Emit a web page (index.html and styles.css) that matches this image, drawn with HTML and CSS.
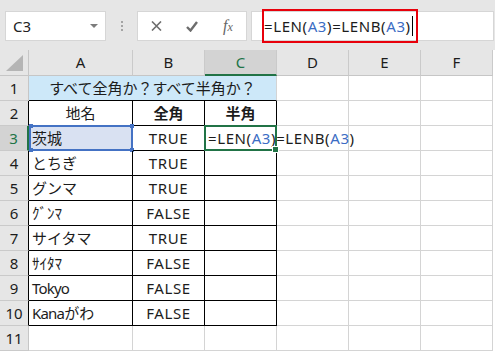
FILE: index.html
```html
<!DOCTYPE html>
<html lang="ja">
<head>
    <meta charset="UTF-8">
    <meta name="viewport" content="width=device-width, initial-scale=1.0">
    <title>LEN LENB</title>
    <link rel="stylesheet" href="styles.css">
</head>
<body>
    <div class="bar">
        <div class="namebox">
            <span>C3</span>
            <span class="drop"></span>
        </div>
        <div class="grip">
            <span></span><span></span><span></span>
        </div>
        <div class="fnbox">
            <div class="fn-btn">
                <svg width="11" height="10" viewBox="0 0 11 10"><path d="M1 0.5 L10 9.5 M10 0.5 L1 9.5" stroke="#6d6d6d" stroke-width="1.6" fill="none"/></svg>
            </div>
            <div class="fn-btn">
                <svg width="12" height="11" viewBox="0 0 12 11"><path d="M1 6 L4.5 9.5 L11 1" stroke="#6d6d6d" stroke-width="2.4" fill="none"/></svg>
            </div>
            <div class="fn-btn fx"><i>f</i><i class="x">x</i></div>
        </div>
        <div class="formula">
            <span class="en">=LEN(<span class="ref">A3</span>)=LENB(<span class="ref">A3</span>)</span><span class="caret"></span>
            <div class="mark"></div>
        </div>
    </div>

    <div class="sheet">
        <!-- column headers -->
        <div class="corner">
            <svg width="18" height="17" viewBox="0 0 18 17"><polygon points="17,0 17,16 0,16" fill="#b5b5b5"/></svg>
        </div>
        <div class="ch">A</div>
        <div class="ch">B</div>
        <div class="ch sel">C</div>
        <div class="ch">D</div>
        <div class="ch">E</div>
        <div class="ch">F</div>

        <!-- row 1 -->
        <div class="rh">1</div>
        <div class="c title">すべて全角か？すべて半角か？</div>
        <div class="c"></div><div class="c"></div><div class="c"></div>

        <!-- row 2 -->
        <div class="rh b">2</div>
        <div class="c b mid">地名</div>
        <div class="c b mid bold">全角</div>
        <div class="c b mid bold">半角</div>
        <div class="c"></div><div class="c"></div><div class="c"></div>

        <!-- row 3 -->
        <div class="rh sel">3</div>
        <div class="c b picked">茨城<div class="refbox"><i class="h tl"></i><i class="h tr"></i><i class="h bl"></i><i class="h br"></i></div></div>
        <div class="c b mid en">TRUE</div>
        <div class="c b active en">=LEN(<span class="ref">A3</span>)=LENB(<span class="ref">A3</span>)<div class="cursor-box"><i class="fill"></i></div></div>
        <div class="c"></div><div class="c"></div><div class="c"></div>

        <!-- row 4 -->
        <div class="rh b">4</div>
        <div class="c b">とちぎ</div>
        <div class="c b mid en">TRUE</div>
        <div class="c b"></div>
        <div class="c"></div><div class="c"></div><div class="c"></div>

        <!-- row 5 -->
        <div class="rh b">5</div>
        <div class="c b">グンマ</div>
        <div class="c b mid en">TRUE</div>
        <div class="c b"></div>
        <div class="c"></div><div class="c"></div><div class="c"></div>

        <!-- row 6 -->
        <div class="rh b">6</div>
        <div class="c b">ｸﾞﾝﾏ</div>
        <div class="c b mid en">FALSE</div>
        <div class="c b"></div>
        <div class="c"></div><div class="c"></div><div class="c"></div>

        <!-- row 7 -->
        <div class="rh b">7</div>
        <div class="c b">サイタマ</div>
        <div class="c b mid en">TRUE</div>
        <div class="c b"></div>
        <div class="c"></div><div class="c"></div><div class="c"></div>

        <!-- row 8 -->
        <div class="rh b">8</div>
        <div class="c b">ｻｲﾀﾏ</div>
        <div class="c b mid en">FALSE</div>
        <div class="c b"></div>
        <div class="c"></div><div class="c"></div><div class="c"></div>

        <!-- row 9 -->
        <div class="rh b">9</div>
        <div class="c b narrow">Tokyo</div>
        <div class="c b mid en">FALSE</div>
        <div class="c b"></div>
        <div class="c"></div><div class="c"></div><div class="c"></div>

        <!-- row 10 -->
        <div class="rh b">10</div>
        <div class="c b"><span class="narrow">Kana</span>がわ</div>
        <div class="c b mid en">FALSE</div>
        <div class="c b"></div>
        <div class="c"></div><div class="c"></div><div class="c"></div>

        <!-- row 11 -->
        <div class="rh">11</div>
        <div class="c"></div><div class="c"></div><div class="c"></div>
        <div class="c"></div><div class="c"></div><div class="c"></div>
    </div>
</body>
</html>
```

FILE: styles.css
```css
body {
    margin: 0;
    background-color: #fff;
    color: #1c1c1c;
    font-family: "Noto Sans", "Noto Sans CJK JP", sans-serif;
    font-size: 15px;
}
.bar {
    display: flex;
    align-items: flex-start;
    height: 50px;
    padding-top: 11px;
    box-sizing: border-box;
    background-color: #e6e6e6;
}
.namebox {
    display: flex;
    align-items: center;
    justify-content: space-between;
    width: 101px;
    height: 30px;
    margin-left: 5px;
    padding: 0 7px;
    box-sizing: border-box;
    background-color: #fff;
    border: 1px solid #d6d6d6;
    color: #222;
}
.drop {
    width: 0;
    height: 0;
    border-left: 4px solid transparent;
    border-right: 4px solid transparent;
    border-top: 4px solid #7c7c7c;
}
.grip {
    display: flex;
    flex-direction: column;
    align-items: center;
    gap: 2px;
    width: 31px;
    padding-top: 10px;
}
.grip span {
    width: 2px;
    height: 2px;
    background-color: #a4a4a4;
}
.fnbox {
    display: flex;
    width: 110px;
    height: 30px;
    box-sizing: border-box;
    background-color: #fff;
    border: 1px solid #d6d6d6;
}
.fn-btn {
    flex: 1;
    display: flex;
    align-items: center;
    justify-content: center;
}
.fx {
    font-family: "Liberation Serif", serif;
    font-size: 16px;
    color: #666;
}
.fx .x {
    font-size: 12px;
    margin-top: 3px;
}
.formula {
    position: relative;
    display: flex;
    align-items: center;
    flex: 1;
    height: 30px;
    margin: 0 1px 0 4px;
    padding-left: 12px;
    box-sizing: border-box;
    background-color: #fff;
    border: 1px solid #d6d6d6;
}
.en {
    letter-spacing: 0.6px;
}
.narrow {
    letter-spacing: -0.8px;
}
.ref {
    color: #3b6cc4;
}
.caret {
    display: inline-block;
    width: 1px;
    height: 20px;
    margin-left: 1px;
    background-color: #000;
}
.mark {
    position: absolute;
    left: 10px;
    top: -3px;
    width: 156px;
    height: 34px;
    box-sizing: border-box;
    border: 2px solid #e8000b;
}
.sheet {
    display: grid;
    grid-template-columns: 29px 104px 72px 72px 72px 72px 72px;
    grid-template-rows: 26px repeat(11, 25px);
}
.corner {
    display: flex;
    align-items: flex-end;
    justify-content: flex-end;
    padding: 0 4px 3px 0;
    background-color: #e6e6e6;
    border-right: 1px solid #c6c6c6;
    border-bottom: 1px solid #c6c6c6;
}
.ch {
    text-align: center;
    line-height: 25px;
    background-color: #e6e6e6;
    border-right: 1px solid #cacaca;
    border-bottom: 1px solid #c6c6c6;
}
.ch.sel {
    line-height: 24px;
    background-color: #d3d3d3;
    color: #217346;
    border-bottom: 2px solid #217346;
}
.rh {
    text-align: center;
    line-height: 24px;
    background-color: #e6e6e6;
    border-right: 1px solid #c6c6c6;
    border-bottom: 1px solid #cacaca;
}
.rh.b {
    border-right-color: #000;
}
.rh.sel {
    background-color: #d3d3d3;
    color: #217346;
    border-right: 2px solid #217346;
}
.c {
    position: relative;
    padding: 0 3px;
    line-height: 24px;
    white-space: nowrap;
    border-right: 1px solid #d4d4d4;
    border-bottom: 1px solid #d4d4d4;
}
.c.b {
    border-right-color: #000;
    border-bottom-color: #000;
}
.mid {
    text-align: center;
}
.bold {
    font-weight: bold;
}
.title {
    grid-column: span 3;
    text-align: center;
    background-color: #cde8f9;
    border-bottom-color: #000;
}
.picked {
    background-color: #d9e1f2;
}
.refbox {
    position: absolute;
    top: -1px;
    left: 0;
    right: -1px;
    bottom: -1px;
    border: 2px solid #4472c4;
}
.h {
    position: absolute;
    width: 4px;
    height: 4px;
    background-color: #4472c4;
}
.tl { top: -3px; left: -2px; }
.tr { top: -3px; right: -3px; }
.bl { bottom: -3px; left: -2px; }
.br { bottom: -3px; right: -3px; }
.active {
    z-index: 1;
}
.cursor-box {
    position: absolute;
    top: -1px;
    left: -1px;
    right: -1px;
    bottom: -1px;
    border: 2px solid #217346;
}
.fill {
    position: absolute;
    right: -4px;
    bottom: -4px;
    width: 5px;
    height: 5px;
    background-color: #217346;
    border: 1px solid #fff;
}
```
